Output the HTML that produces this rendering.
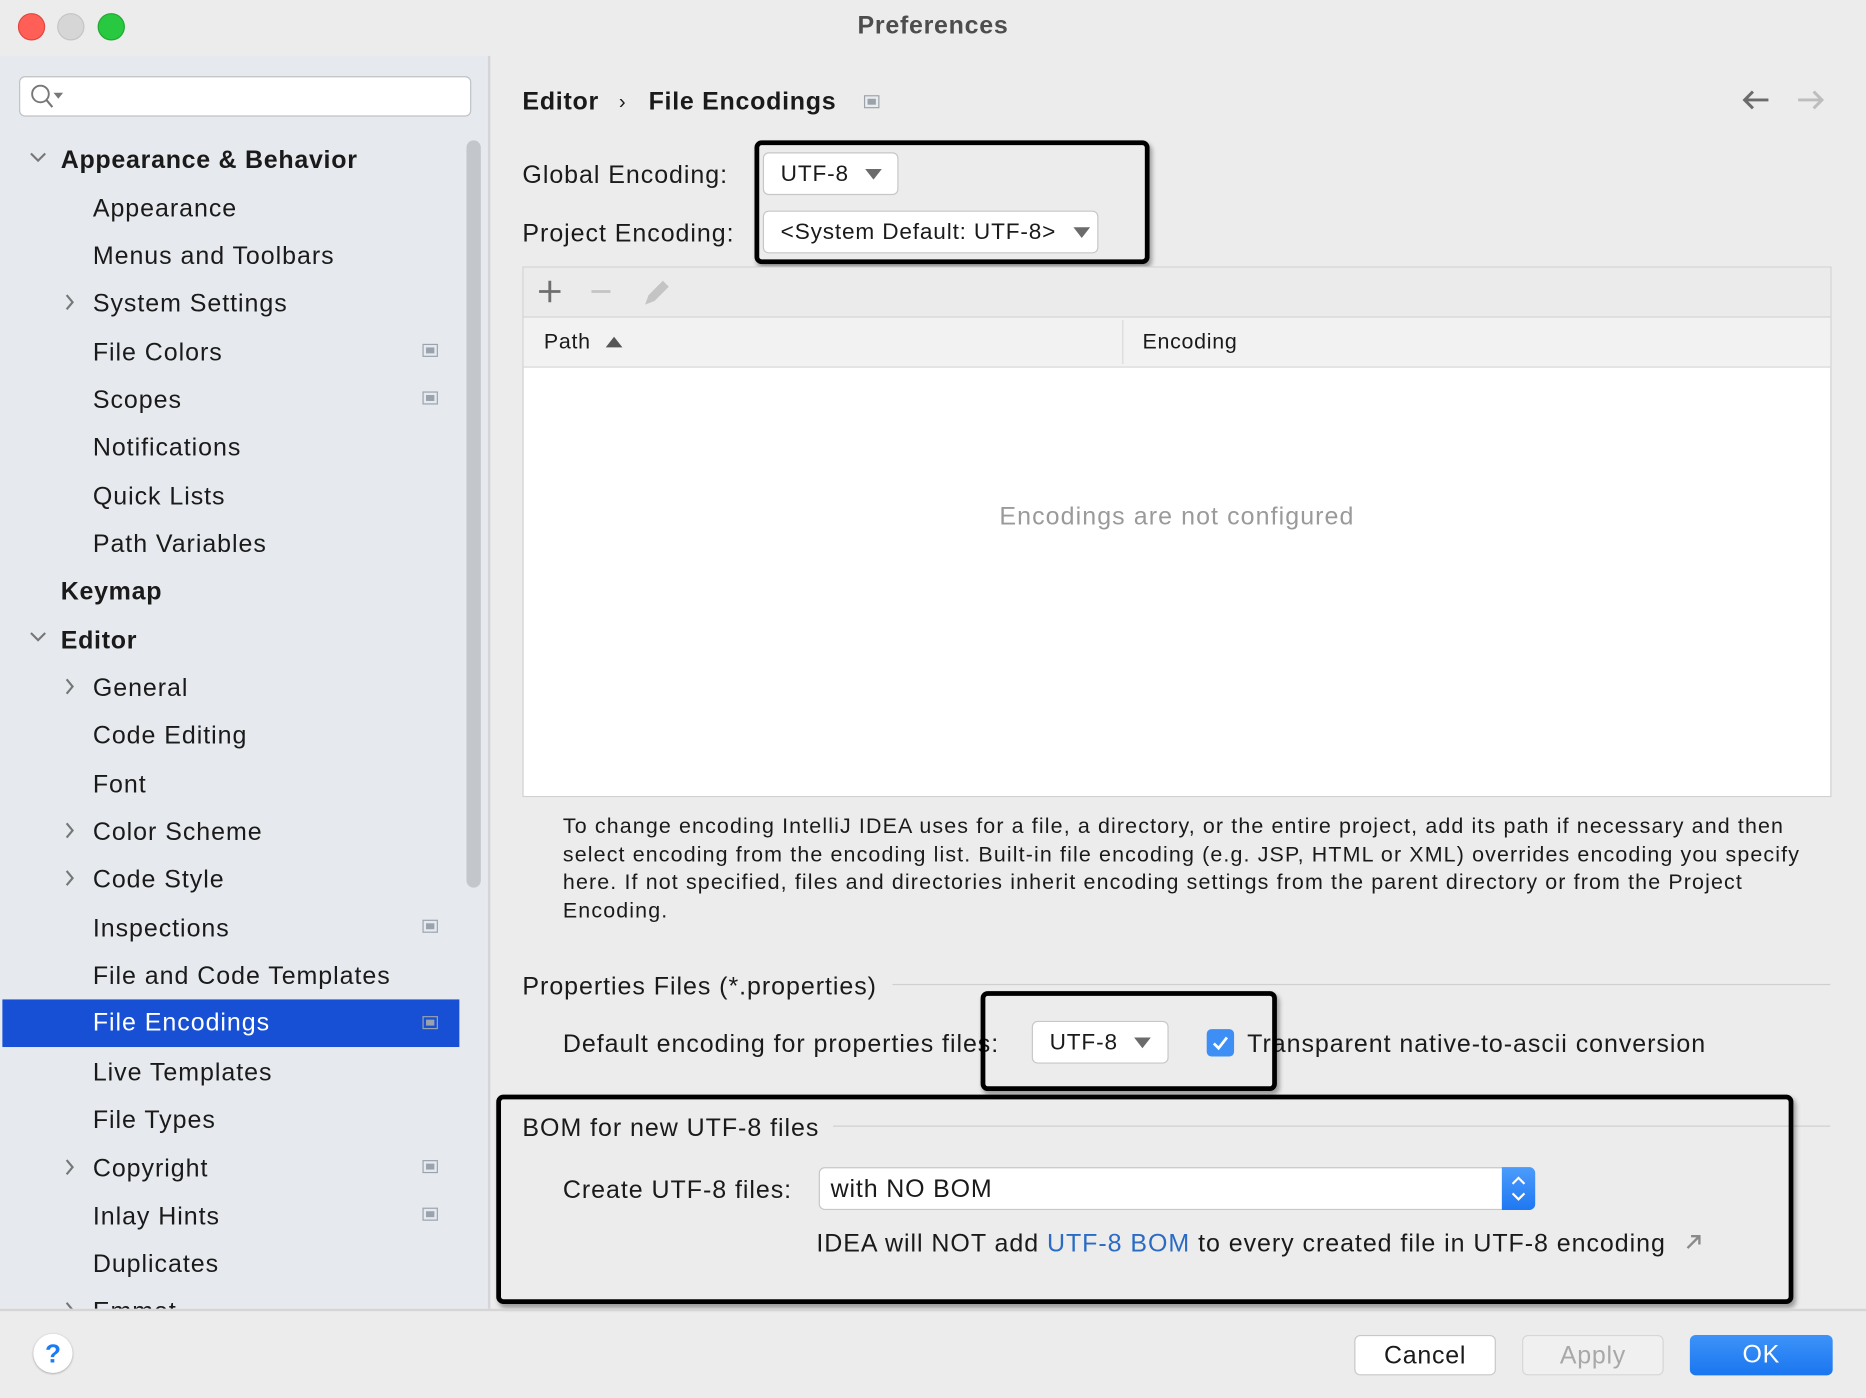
<!DOCTYPE html>
<html><head><meta charset="utf-8"><style>
html,body{margin:0;padding:0;width:1866px;height:1398px;overflow:hidden;background:#ececec}
#w{position:absolute;left:0;top:0;width:1568px;height:1175px;transform:scale(1.19005,1.18979);transform-origin:0 0;background:#ececec;font-family:"Liberation Sans",sans-serif;color:#1a1a1a}
.a{position:absolute;white-space:nowrap}
.t{position:absolute;white-space:nowrap;font-size:21px;line-height:30px;height:30px;letter-spacing:0.8px;margin-top:2px}
.b{font-weight:bold;letter-spacing:0.6px}
.ic{position:absolute;width:13px;height:11px;border:1.5px solid #9aa3ad;box-sizing:border-box;background:#e6e9ed}
.ic:after{content:"";position:absolute;left:2px;top:2px;right:2px;bottom:2px;background:#9aa3ad}
.box{position:absolute;border:4px solid #000;border-radius:6px;box-shadow:2px 3px 4px rgba(0,0,0,.35)}
.cb{position:absolute;background:#fff;border:1px solid #c7c7c7;border-radius:5px;box-sizing:border-box;font-size:19px;line-height:36px;padding-left:14px;white-space:nowrap;letter-spacing:0.7px}
.tri{display:inline-block;width:0;height:0;border-left:7px solid transparent;border-right:7px solid transparent;border-top:9px solid #6b6b6b;vertical-align:middle;margin-left:14px}
.btn{position:absolute;height:34px;border-radius:5px;box-sizing:border-box;text-align:center;font-size:21px;line-height:34px;letter-spacing:0.6px}
</style></head><body><div id="w">
<div class="a" style="left:15px;top:11px;width:21px;height:21px;border-radius:50%;background:#ff5f57;border:0.5px solid #e14640"></div>
<div class="a" style="left:48px;top:11px;width:21px;height:21px;border-radius:50%;background:#d6d6d6;border:0.5px solid #c4c4c4"></div>
<div class="a" style="left:82px;top:11px;width:21px;height:21px;border-radius:50%;background:#28c840;border:0.5px solid #1fa834"></div>
<div class="a b" style="left:0;width:1568px;top:10px;text-align:center;font-size:21px;color:#4d4d4d">Preferences</div>

<div class="a" style="left:0;top:47px;width:410px;height:1053px;background:#e6e9ed;border-right:2px solid #d3d5d8"></div>
<div class="a" style="left:16px;top:64px;width:380px;height:34px;background:#fff;border:1px solid #bfc2c5;border-radius:5px;box-sizing:border-box"></div>
<svg class="a" style="left:24px;top:70px" width="30" height="22"><circle cx="10" cy="9" r="7" fill="none" stroke="#777" stroke-width="1.6"/><line x1="15" y1="14" x2="20" y2="20" stroke="#777" stroke-width="1.8"/><path d="M21 8h8l-4 5z" fill="#777"/></svg>
<div class="a" style="left:392px;top:118px;width:12px;height:628px;background:#c3c6ca;border-radius:6px"></div>
<div class="a" style="left:2px;top:840px;width:384px;height:40px;background:#1750d4"></div>

<svg class="a" style="left:0;top:0" width="410" height="1100">
<g fill="none" stroke="#777" stroke-width="1.8">
<path d="M26 129l6 6 6-6"/><path d="M26 532l6 6 6-6"/>
<path d="M56 248l5 6-5 6"/><path d="M56 571l5 6-5 6"/><path d="M56 692l5 6-5 6"/><path d="M56 732l5 6-5 6"/><path d="M56 975l5 6-5 6"/><path d="M56 1095l5 6-5 6"/>
</g></svg>
<div class="t b" style="left:51px;top:118px">Appearance &amp; Behavior</div>
<div class="t" style="left:78px;top:159px">Appearance</div>
<div class="t" style="left:78px;top:199px">Menus and Toolbars</div>
<div class="t" style="left:78px;top:239px">System Settings</div>
<div class="t" style="left:78px;top:280px">File Colors</div>
<div class="t" style="left:78px;top:320px">Scopes</div>
<div class="t" style="left:78px;top:360px">Notifications</div>
<div class="t" style="left:78px;top:401px">Quick Lists</div>
<div class="t" style="left:78px;top:441px">Path Variables</div>
<div class="t b" style="left:51px;top:481px">Keymap</div>
<div class="t b" style="left:51px;top:522px">Editor</div>
<div class="t" style="left:78px;top:562px">General</div>
<div class="t" style="left:78px;top:602px">Code Editing</div>
<div class="t" style="left:78px;top:643px">Font</div>
<div class="t" style="left:78px;top:683px">Color Scheme</div>
<div class="t" style="left:78px;top:723px">Code Style</div>
<div class="t" style="left:78px;top:764px">Inspections</div>
<div class="t" style="left:78px;top:804px">File and Code Templates</div>
<div class="t" style="left:78px;top:843px;color:#fff">File Encodings</div>
<div class="t" style="left:78px;top:885px">Live Templates</div>
<div class="t" style="left:78px;top:925px">File Types</div>
<div class="t" style="left:78px;top:966px">Copyright</div>
<div class="t" style="left:78px;top:1006px">Inlay Hints</div>
<div class="t" style="left:78px;top:1046px">Duplicates</div>
<div class="a" style="left:0;top:1086px;width:410px;height:14px;overflow:hidden"><div class="t" style="left:78px;top:0">Emmet</div></div>
<div class="ic" style="left:355px;top:289px"></div>
<div class="ic" style="left:355px;top:329px"></div>
<div class="ic" style="left:355px;top:773px"></div>
<div class="ic" style="left:355px;top:854px;background:#1750d4"></div>
<div class="ic" style="left:355px;top:975px"></div>
<div class="ic" style="left:355px;top:1015px"></div>

<div class="t b" style="left:439px;top:69px">Editor</div>
<div class="t" style="left:520px;top:69px;font-size:17px">&#8250;</div>
<div class="t b" style="left:545px;top:69px">File Encodings</div>
<div class="ic" style="left:726px;top:80px;background:#ececec"></div>
<svg class="a" style="left:1462px;top:73px" width="75" height="22"><g fill="none" stroke-width="2.5"><path d="M4 11h20M11 4l-7 7 7 7" stroke="#6b6b6b"/><path d="M49 11h20M62 4l7 7-7 7" stroke="#bdbdbd"/></g></svg>

<div class="t" style="left:439px;top:131px">Global Encoding:</div>
<div class="cb" style="left:641px;top:128px;width:114px;height:36px">UTF-8<span class="tri"></span></div>
<div class="t" style="left:439px;top:180px">Project Encoding:</div>
<div class="cb" style="left:641px;top:177px;width:282px;height:36px">&lt;System Default: UTF-8&gt;<span class="tri"></span></div>
<div class="box" style="left:634px;top:118px;width:324px;height:96px"></div>

<div class="a" style="left:439px;top:224px;width:1100px;height:446px;border:1px solid #d0d0d0;box-sizing:border-box;background:#fff"></div>
<div class="a" style="left:440px;top:225px;width:1098px;height:41px;background:#ebebeb;border-bottom:1px solid #d0d0d0"></div>
<svg class="a" style="left:450px;top:232px" width="120" height="28"><path d="M12 4v18M3 13h18" stroke="#6e6e6e" stroke-width="2.4"/><path d="M47 13h16" stroke="#c4c4c4" stroke-width="2.4"/><path d="M92 24l3-8 12-12 5 5-12 12z" fill="#c4c4c4"/></svg>
<div class="a" style="left:440px;top:267px;width:1098px;height:41px;background:#f2f2f2;border-bottom:1px solid #d8d8d8"></div>
<div class="a" style="left:943px;top:269px;width:1px;height:37px;background:#d8d8d8"></div>
<div class="a" style="left:457px;top:277px;font-size:18px;letter-spacing:0.6px">Path</div>
<svg class="a" style="left:508px;top:281px" width="16" height="12"><path d="M1 11L8 2l7 9z" fill="#555"/></svg>
<div class="a" style="left:960px;top:277px;font-size:18px;letter-spacing:0.6px">Encoding</div>
<div class="a" style="left:439px;width:1100px;top:423px;text-align:center;font-size:21px;color:#9a9a9a;letter-spacing:0.9px">Encodings are not configured</div>

<div class="a" style="left:473px;top:683px;font-size:18px;line-height:23.5px;color:#1a1a1a;letter-spacing:0.95px">To change encoding IntelliJ IDEA uses for a file, a directory, or the entire project, add its path if necessary and then<br>select encoding from the encoding list. Built-in file encoding (e.g. JSP, HTML or XML) overrides encoding you specify<br>here. If not specified, files and directories inherit encoding settings from the parent directory or from the Project<br>Encoding.</div>

<div class="t" style="left:439px;top:813px">Properties Files (*.properties)</div>
<div class="a" style="left:750px;top:827px;width:788px;height:1px;background:#cfcfcf"></div>
<div class="t" style="left:473px;top:861px">Default encoding for properties files:</div>
<div class="cb" style="left:867px;top:858px;width:115px;height:36px">UTF-8<span class="tri"></span></div>
<div class="a" style="left:1014px;top:865px;width:23px;height:23px;border-radius:4px;background:#3d8ff5"></div>
<svg class="a" style="left:1014px;top:865px" width="23" height="23"><path d="M6 12l4 4 7-9" fill="none" stroke="#fff" stroke-width="2.3"/></svg>
<div class="t" style="left:1048px;top:861px">Transparent native-to-ascii conversion</div>
<div class="box" style="left:824px;top:833px;width:241px;height:76px"></div>

<div class="t" style="left:439px;top:932px">BOM for new UTF-8 files</div>
<div class="a" style="left:700px;top:946px;width:838px;height:1px;background:#cfcfcf"></div>
<div class="t" style="left:473px;top:984px">Create UTF-8 files:</div>
<div class="cb" style="left:688px;top:981px;width:602px;height:36px;font-size:21px;padding-left:9px;overflow:hidden">with NO BOM</div>
<div class="a" style="left:1262px;top:981px;width:28px;height:36px;background:linear-gradient(#4c9cfb,#1f78f2);border-radius:0 5px 5px 0"></div>
<svg class="a" style="left:1262px;top:981px" width="28" height="36"><path d="M9 14l5-5 5 5M9 22l5 5 5-5" fill="none" stroke="#fff" stroke-width="1.8"/></svg>
<div class="t" style="left:686px;top:1029px">IDEA will NOT add <span style="color:#2a6cc4">UTF-8 BOM</span> to every created file in UTF-8 encoding</div>
<svg class="a" style="left:1416px;top:1037px" width="14" height="14"><path d="M2 12L11 3M5 2h7v7" fill="none" stroke="#8a8a8a" stroke-width="2"/></svg>
<div class="box" style="left:417px;top:920px;width:1082px;height:168px"></div>

<div class="a" style="left:0;top:1100px;width:1568px;height:2px;background:#d5d5d5"></div>
<div class="a" style="left:28px;top:1121px;width:33px;height:33px;border-radius:50%;background:#fff;box-shadow:0 0.5px 2px rgba(0,0,0,.35);text-align:center;font-size:22px;line-height:33px;color:#1a7cf5;font-weight:bold">?</div>
<div class="btn" style="left:1138px;top:1122px;width:119px;background:#fff;border:1px solid #c8c8c8">Cancel</div>
<div class="btn" style="left:1279px;top:1122px;width:119px;background:#f0f0f0;border:1px solid #d6d6d6;color:#a8a8a8">Apply</div>
<div class="btn" style="left:1420px;top:1122px;width:120px;background:linear-gradient(#3d93f8,#1a76f0);color:#fff">OK</div>
</div></body></html>
